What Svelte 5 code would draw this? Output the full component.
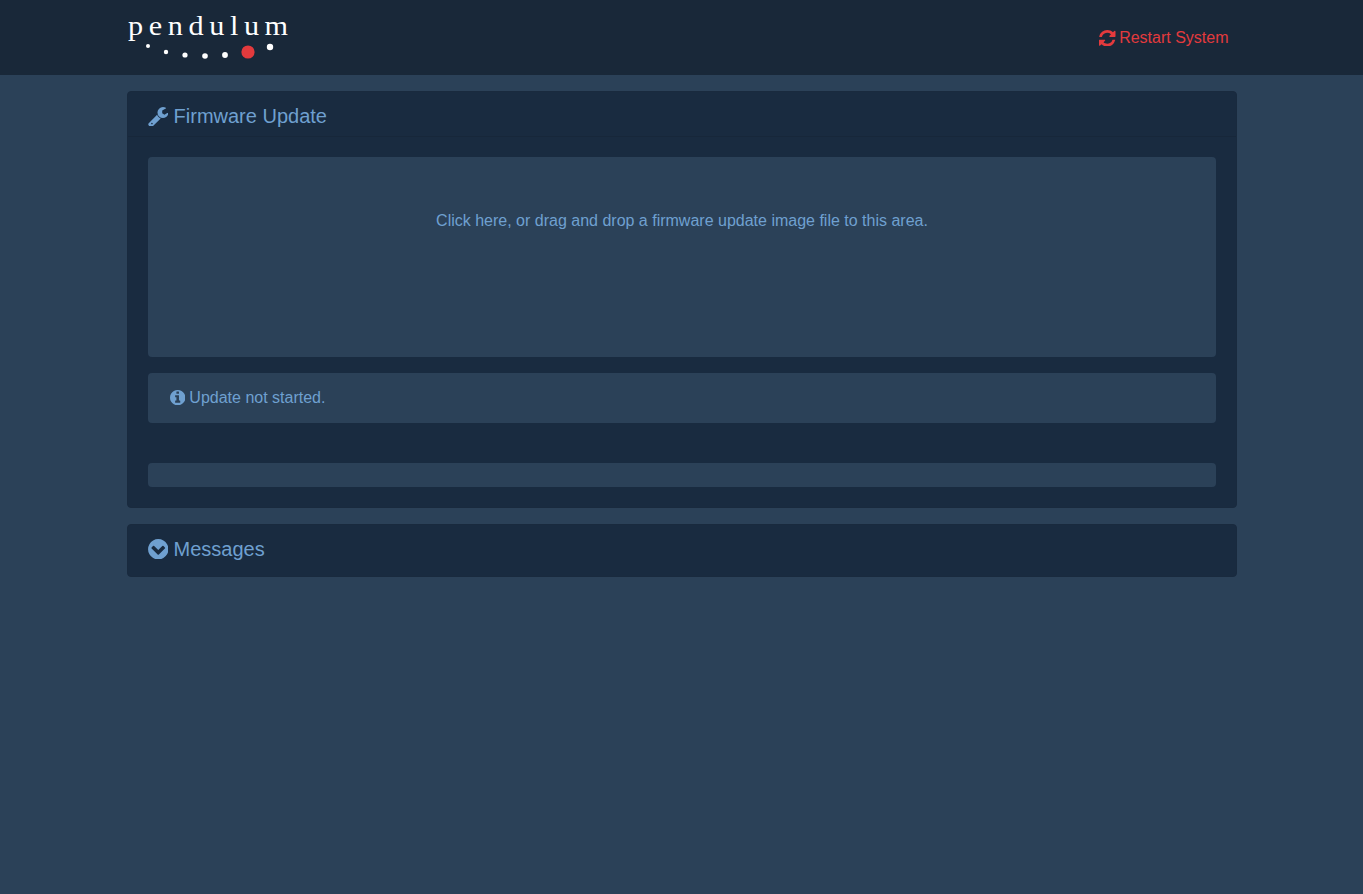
<script>
    let message = 'Update not started.';
</script>

<header class="topbar">
    <div class="topbar-inner">
        <div class="logo">
            <div class="logo-text">pendulum</div>
            <svg class="logo-dots" width="160" height="22" viewBox="0 0 160 22">
                <circle cx="20" cy="5" r="2" fill="#fff" />
                <circle cx="38" cy="11" r="2.2" fill="#fff" />
                <circle cx="57" cy="14" r="2.6" fill="#fff" />
                <circle cx="77" cy="15" r="2.8" fill="#fff" />
                <circle cx="97" cy="14" r="2.9" fill="#fff" />
                <circle cx="120" cy="11" r="6.6" fill="#e33a3d" />
                <circle cx="142" cy="6" r="3.2" fill="#fff" />
            </svg>
        </div>
        <a class="restart" href="#restart">
            <svg class="icon" width="16.5" height="16.5" viewBox="128 128 1536 1536"><path fill="currentColor" d="M1639 1056q0 5-1 7-64 268-268 434.5t-478 166.5q-146 0-282.5-55t-243.5-157l-129 129q-19 19-45 19t-45-19-19-45v-448q0-26 19-45t45-19h448q26 0 45 19t19 45-19 45l-137 137q71 66 161 102t187 36q134 0 250-65t186-179q11-17 53-117 8-23 30-23h192q13 0 22.5 9.5t9.5 22.5zm25-800v448q0 26-19 45t-45 19h-448q-26 0-45-19t-19-45 19-45l138-138q-148-137-349-137-134 0-250 65t-186 179q-11 17-53 117-8 23-30 23h-199q-13 0-22.5-9.5t-9.5-22.5v-7q65-268 270-434.5t480-166.5q146 0 284 55.5t245 156.5l130-129q19-19 45-19t45 19 19 45z" /></svg>
            Restart System
        </a>
    </div>
</header>

<main class="content">
    <section class="panel">
        <h2 class="panel-heading ruled">
            <svg class="icon" width="20.5" height="19.5" viewBox="64 128 1664 1580"><path fill="currentColor" d="M448 1472q0-26-19-45t-45-19-45 19-19 45 19 45 45 19 45-19 19-45zm644-420l-682 682q-37 37-90 37-52 0-91-37l-106-108q-38-36-38-90 0-53 38-91l681-681q39 98 114.5 173.5t173.5 114.5zm634-435q0 39-23 106-47 134-164.5 217.5t-258.5 83.5q-185 0-316.5-131.5t-131.5-316.5 131.5-316.5 316.5-131.5q58 0 121.5 16.5t107.5 46.5q16 11 16 28t-16 28l-293 169v224l193 107q5-3 79-48.5t135.5-81 70.5-35.5q15 0 23.5 10t8.5 25z" /></svg>
            Firmware Update
        </h2>
        <div class="panel-body">
            <div class="dropzone">Click here, or drag and drop a firmware update image file to this area.</div>
            <div class="status">
                <svg class="icon" width="15.4" height="15.4" viewBox="128 128 1536 1536"><path fill="currentColor" d="M1152 1376v-160q0-14-9-23t-23-9h-96v-512q0-14-9-23t-23-9h-320q-14 0-23 9t-9 23v160q0 14 9 23t23 9h96v320h-96q-14 0-23 9t-9 23v160q0 14 9 23t23 9h448q14 0 23-9t9-23zm-128-896v-160q0-14-9-23t-23-9h-192q-14 0-23 9t-9 23v160q0 14 9 23t23 9h192q14 0 23-9t9-23zm640 416q0 209-103 385.5t-279.5 279.5-385.5 103-385.5-103-279.5-279.5-103-385.5 103-385.5 279.5-279.5 385.5-103 385.5 103 279.5 279.5 103 385.5z" /></svg>
                {message}
            </div>
            <div class="progress"></div>
        </div>
    </section>

    <section class="panel">
        <h2 class="panel-heading">
            <svg class="icon" width="20.5" height="20.5" viewBox="128 124 1536 1544"><path fill="currentColor" d="M941 1299l454-454q19-19 19-45t-19-45l-102-102q-19-19-45-19t-45 19l-307 307-307-307q-19-19-45-19t-45 19l-102 102q-19 19-19 45t19 45l454 454q19 19 45 19t45-19zM1664 896q0 209-103 385.5t-279.5 279.5-385.5 103-385.5-103-279.5-279.5-103-385.5 103-385.5 279.5-279.5 385.5-103 385.5 103 279.5 279.5 103 385.5z" /></svg>
            Messages
        </h2>
    </section>
</main>

<style>
    :global(body) {
        margin: 0;
        background: #2b4158;
        color: #6fa0d0;
        font-family: "Liberation Sans", Arial, sans-serif;
        font-size: 16px;
    }

    .topbar {
        height: 75px;
        background: #192839;
    }

    .topbar-inner {
        width: 1110px;
        height: 75px;
        margin: 0 auto;
        display: flex;
        justify-content: space-between;
        align-items: flex-start;
    }

    .logo {
        width: 160px;
        margin-left: 1px;
        padding-top: 11px;
    }

    .logo-text {
        font-family: "Liberation Serif", serif;
        font-size: 27px;
        line-height: 31px;
        letter-spacing: 5px;
        color: #fff;
        white-space: nowrap;
        transform: scaleX(1.12);
        transform-origin: left;
    }

    .logo-dots {
        display: block;
        margin-top: -1px;
    }

    .restart {
        color: #e33a3d;
        text-decoration: none;
        margin: 29px 8px 0 0;
        line-height: 18px;
    }

    .restart .icon {
        margin-right: -1px;
        vertical-align: -3px;
    }

    .icon {
        vertical-align: -2px;
    }

    .content {
        width: 1110px;
        margin: 0 auto;
        padding-top: 16px;
    }

    .panel {
        background: #192b40;
        border: 1px solid #192a3e;
        border-radius: 4px;
        margin-bottom: 16px;
    }

    .panel-heading {
        margin: 0;
        padding: 11px 20px 13px;
        font-size: 20px;
        font-weight: 400;
        line-height: 27px;
    }

    .panel-heading .icon {
        vertical-align: -3px;
    }

    .ruled {
        height: 19px;
        padding-bottom: 14px;
        border-bottom: 1px solid #17273a;
    }

    .panel-body {
        padding: 20px;
    }

    .dropzone {
        height: 200px;
        box-sizing: border-box;
        padding: 55px 0 0 1px;
        line-height: 18px;
        text-align: center;
        background: #2b4158;
        border-radius: 4px;
    }

    .status {
        height: 50px;
        box-sizing: border-box;
        margin-top: 16px;
        padding: 16px 22px;
        line-height: 18px;
        background: #2b4158;
        border-radius: 4px;
    }

    .progress {
        height: 24px;
        margin-top: 40px;
        background: #2b4158;
        border-radius: 4px;
    }
</style>
